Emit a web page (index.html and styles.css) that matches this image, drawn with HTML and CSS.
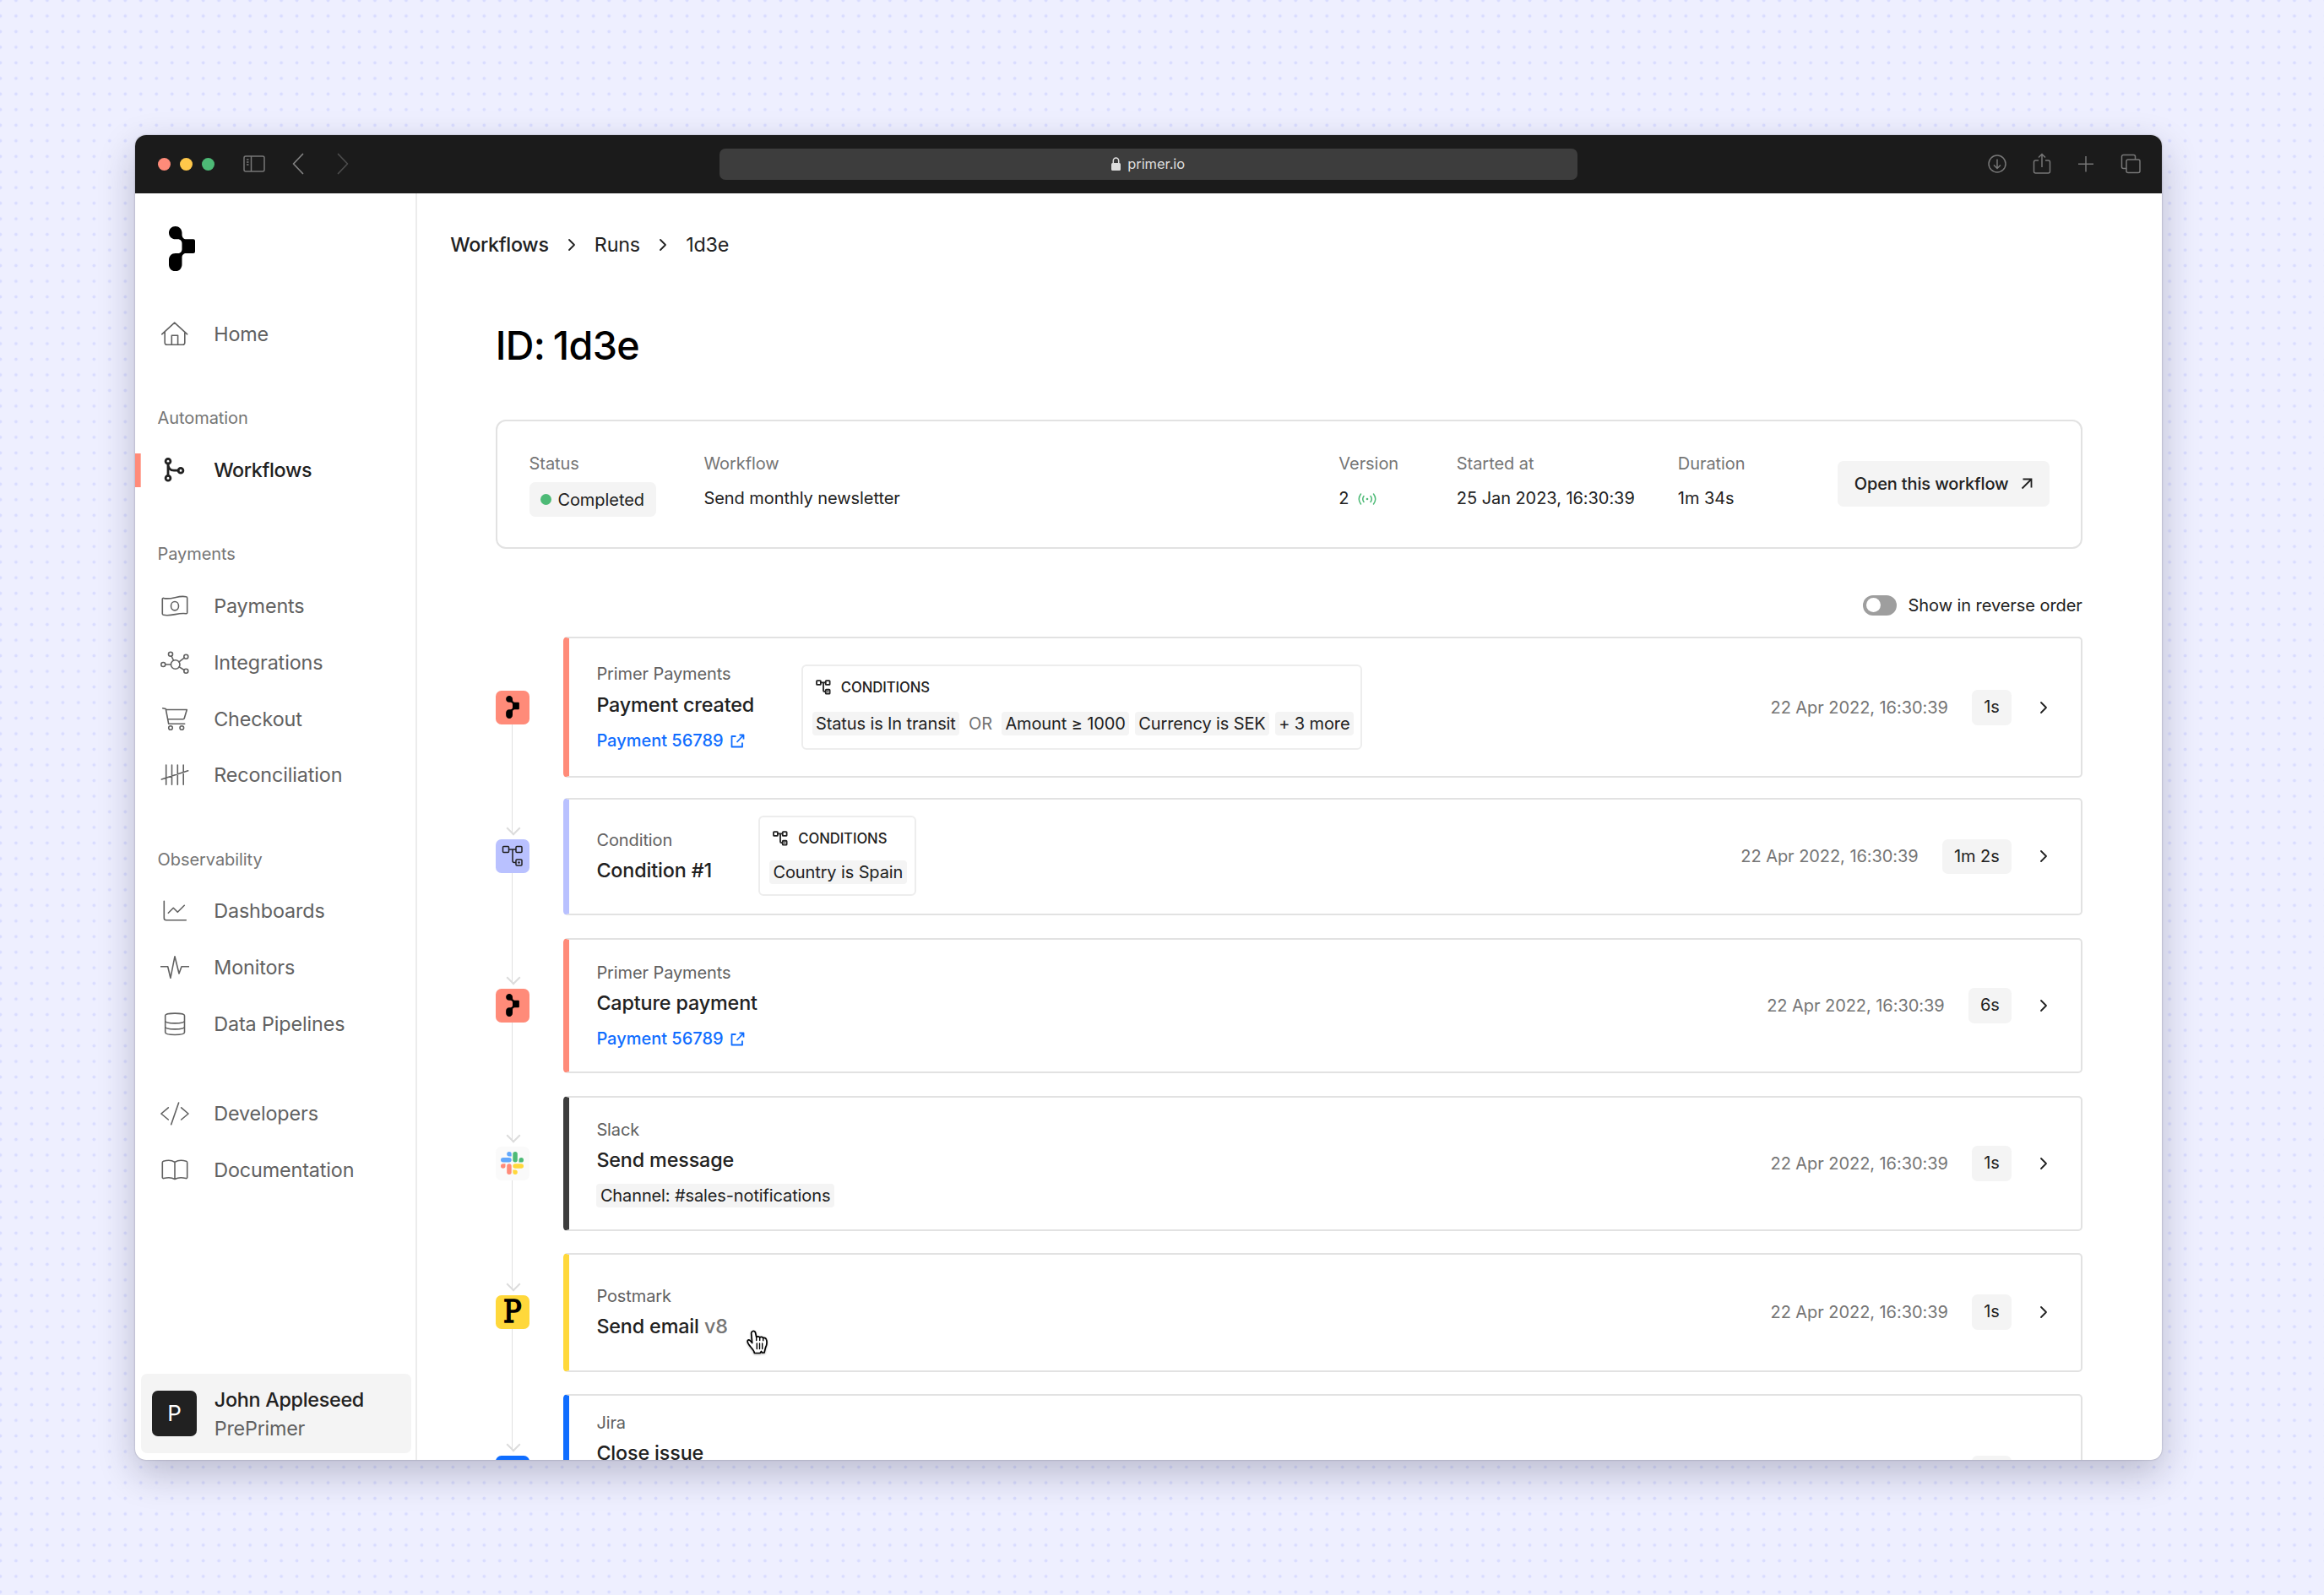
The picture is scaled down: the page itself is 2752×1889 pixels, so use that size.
FILE: index.html
```html
<!DOCTYPE html>
<html lang="en">
<head>
<meta charset="utf-8">
<title>Primer – Workflow run 1d3e</title>
<link rel="stylesheet" href="styles.css">
</head>
<body>
<svg class="defs" width="0" height="0" aria-hidden="true">
  <symbol id="primer" viewBox="0 0 31 53.3"><path d="M7.75 0C12 0 15.5 3.4 15.5 7.7V10C15.5 13 17.500 15.300 20.500 15.300H29Q31 15.300 31 17.300V30Q31 32 29 32H20.500C17.500 32 15.500 34 15.500 37V45C15.500 50 12 53.300 7.750 53.300S0 50 0 45.500V40C0 35.500 3 32 7.750 32H10.500C13.500 32 15.500 30 15.500 27V20.500C15.500 17.500 13.500 15.300 10.500 15.300H7.750C3.400 15.300 0 12 0 7.700S3.400 0 7.750 0Z"/></symbol>
  <symbol id="chev" viewBox="0 0 12 16"><path d="M3 2l6 6-6 6" fill="none" stroke="currentColor" stroke-width="1.8" stroke-linecap="round" stroke-linejoin="round"/></symbol>
  <symbol id="branch" viewBox="0 0 26 26"><g fill="none" stroke="currentColor"><rect x="1.500" y="1.500" width="7" height="7" rx="1"/><rect x="17" y="1.500" width="7" height="7" rx="1"/><rect x="17" y="17" width="7" height="7" rx="1"/><path d="M8.500 5H17M13 5v13.500q0 2 2 2h2"/></g><circle cx="20.500" cy="20.500" r="1.300" fill="currentColor"/></symbol>
  <symbol id="ext" viewBox="0 0 17 17"><path d="M6.500 3H1.500V15.500H14V10.500M10.500 1.500H15.500V6.500M15.500 1.500L7.500 10" fill="none" stroke="currentColor" stroke-width="1.800" stroke-linejoin="round"/></symbol>
</svg>
<svg class="dots" aria-hidden="true"><defs><pattern id="dot" width="18.48" height="18.48" x="-8.8" y="-8.8" patternUnits="userSpaceOnUse"><circle cx="9.240" cy="9.240" r="1.900" fill="#d9dcff"/></pattern></defs><rect width="100%" height="100%" fill="url(#dot)"/></svg>

<div class="window">
  <header class="toolbar">
    <div class="lights"><i class="red"></i><i class="amber"></i><i class="green"></i></div>
    <svg class="panel" width="26" height="20" viewBox="0 0 26 20" fill="none" stroke="#777" stroke-width="1.500"><rect x="1" y="1" width="24" height="18" rx="2"/><path d="M9.500 1v18M4 5h2.500M4 8h2.500M4 11h2.500"/></svg>
    <svg class="back" width="14" height="26" viewBox="0 0 14 26" fill="none" stroke="#828282" stroke-width="1.700" stroke-linecap="round" stroke-linejoin="round"><path d="M12.500 1.500L1.500 13l11 11.500"/></svg>
    <svg class="fwd" width="14" height="26" viewBox="0 0 14 26" fill="none" stroke="#4c4c4c" stroke-width="1.700" stroke-linecap="round" stroke-linejoin="round"><path d="M1.500 1.500L12.500 13l-11 11.500"/></svg>
    <div class="url">
      <svg width="11" height="16" viewBox="0 0 11 16"><rect y="7" width="11" height="9" rx="1.500" fill="#dedede"/><path d="M2.300 8V4.500a3.200 3.500 0 0 1 6.400 0V8" fill="none" stroke="#dedede" stroke-width="1.500"/></svg>
      <span>primer.io</span>
    </div>
    <div class="tools">
      <svg width="24" height="26" viewBox="0 0 24 26"><circle cx="12" cy="13" r="10"/><path d="M12 7.500v10.500M8 14.500l4 4 4-4"/></svg>
      <svg width="24" height="26" viewBox="0 0 24 26"><path d="M8 9H4.500a2 2 0 0 0-2 2v11a2 2 0 0 0 2 2h15a2 2 0 0 0 2-2V11a2 2 0 0 0-2-2H16M12 17V2M8 5.500l4-4 4 4"/></svg>
      <svg width="24" height="26" viewBox="0 0 24 26"><path d="M12 4v18.500M3 13.200h18"/></svg>
      <svg width="24" height="26" viewBox="0 0 24 26"><rect x="7" y="8" width="16" height="15.500" rx="2"/><path d="M7 18.500H3.500a2 2 0 0 1-2-2V4.500a2 2 0 0 1 2-2h12a2 2 0 0 1 2 2V8"/></svg>
    </div>
  </header>

  <div class="body">
    <aside class="sidebar">
      <svg class="logo" width="31" height="53.300"><use href="#primer"/></svg>
      <nav>
        <a class="item"><svg viewBox="0 0 34 34"><path d="M1.700 16.800L16.700 3.200l15 13.600M5.200 14.200V27a2.300 2.300 0 0 0 2.300 2.300h19a2.300 2.300 0 0 0 2.300-2.300V14.200M13.300 29V18.300h7.300V29"/></svg>Home</a>
        <h4>Automation</h4>
        <a class="item active"><svg viewBox="0 0 34 34"><circle cx="9" cy="6.200" r="2.900"/><circle cx="9" cy="26.200" r="2.900"/><circle cx="24" cy="17.200" r="2.900"/><path d="M9 9v14.300M9 9.500c0 4.500 2.500 7.700 7 7.700h5"/></svg>Workflows</a>
        <h4>Payments</h4>
        <a class="item"><svg viewBox="0 0 34 34"><path d="M3.500 7.400C13 10 21 3.500 30.500 5.800a1.500 1.500 0 0 1 1.200 1.500V24.600a1 1 0 0 1-1.200 1.100C21 24 13 29.500 3.500 27.300A1.500 1.500 0 0 1 2.300 26V8.200A1 1 0 0 1 3.500 7.400Z"/><ellipse cx="17" cy="16.700" rx="4.500" ry="5.200"/></svg>Payments</a>
        <a class="item"><svg viewBox="0 0 34 34"><circle cx="17.700" cy="19" r="5.300"/><circle cx="3.300" cy="19" r="2.500"/><circle cx="12" cy="6.700" r="2.500"/><circle cx="30.300" cy="9.700" r="2.500"/><circle cx="30.300" cy="26.700" r="2.500"/><path d="M5.800 19h6.600M13 9l2.500 5.200M28.200 11.200L22 15.800M28 25.500L22.300 21.800"/></svg>Integrations</a>
        <a class="item"><svg viewBox="0 0 34 34"><path d="M2.700 3.700l3.600.8L9.700 22.300H28.700M6.600 5.500H31.300L28.300 15.500a1.500 1.500 0 0 1-1.400 1.200H8.700"/><circle cx="12" cy="27" r="2.300"/><circle cx="25.300" cy="27" r="2.300"/></svg>Checkout</a>
        <a class="item"><svg viewBox="0 0 34 34"><path d="M6.700 5v23.300M13.500 5v23.300M20.300 5v23.300M27.200 5v23.300M1.300 22L32.700 11.700"/></svg>Reconciliation</a>
        <h4>Observability</h4>
        <a class="item"><svg viewBox="0 0 34 34"><path d="M4.300 5.300V25.300a2.400 2.400 0 0 0 2.400 2.400H30.300M9.300 19.300l6-6 5 5 8-8"/></svg>Dashboards</a>
        <a class="item"><svg viewBox="0 0 34 34"><path d="M.3 15.700H8.700l3.200 13.600L17 3.700l5 20.300 3-8.300H33.500"/></svg>Monitors</a>
        <a class="item"><svg viewBox="0 0 34 34"><path d="M5.700 6.700C5.700 3.200 28.500 3.200 28.500 6.700V26.500C28.500 30.500 5.700 30.500 5.700 26.500ZM5.700 13C5.700 16.800 28.500 16.800 28.500 13M5.700 20C5.700 23.800 28.500 23.800 28.500 20"/></svg>Data Pipelines</a>
        <a class="item spaced"><svg viewBox="0 0 34 34"><path d="M9.300 9.800L.9 17l8.400 7M24.700 9.800L33 17l-8.300 7M21.600 4L12.700 29.700"/></svg>Developers</a>
        <a class="item"><svg viewBox="0 0 34 34"><path d="M17 7.300C13 4.700 7.500 5 3.500 6.300A1.700 1.700 0 0 0 2.300 8V25.500a1.200 1.200 0 0 0 1.500 1.100C8 25.500 13 25.200 17 27.500C21 25.200 26 25.500 30.200 26.600A1.200 1.200 0 0 0 31.700 25.500V8A1.700 1.700 0 0 0 30.500 6.300C26.500 5 21 4.700 17 7.300ZM17 7.300V27.500"/></svg>Documentation</a>
      </nav>
      <div class="account">
        <div class="avatar">P</div>
        <div class="names"><div class="who">John Appleseed</div><div class="org">PrePrimer</div></div>
      </div>
    </aside>

    <main>
      <div class="crumbs"><b>Workflows</b><svg class="chev"><use href="#chev"/></svg><span>Runs</span><svg class="chev"><use href="#chev"/></svg><span>1d3e</span></div>
      <div class="content">
        <h1>ID: 1d3e</h1>
        <section class="info">
          <div class="col status"><label>Status</label><div class="badge"><i></i>Completed</div></div>
          <div class="col workflow"><label>Workflow</label><p>Send monthly newsletter</p></div>
          <div class="col version"><label>Version</label><p>2<svg width="22" height="14" viewBox="0 0 22 14" fill="none" stroke="#4dba76" stroke-width="1.500" stroke-linecap="round"><path d="M3.500 1Q-1 7 3.500 13M7 3.500Q4.500 7 7 10.500M15 3.500Q17.500 7 15 10.500M18.500 1Q23 7 18.500 13"/><circle cx="11" cy="7" r="1.300" fill="#4dba76" stroke="none"/></svg></p></div>
          <div class="col started"><label>Started at</label><p>25 Jan 2023, 16:30:39</p></div>
          <div class="col duration"><label>Duration</label><p>1m 34s</p></div>
          <button class="open">Open this workflow<svg width="14" height="14" viewBox="0 0 14 14" fill="none" stroke="currentColor" stroke-width="1.800"><path d="M2.500 1.500H12.500V11.500M12.500 1.500L1.500 12.500"/></svg></button>
        </section>
        <div class="order"><i class="switch"></i>Show in reverse order</div>

        <div class="timeline">
          <div class="rail">
            <div class="node coral"><svg width="16" height="27"><use href="#primer"/></svg></div>
            <div class="link l1"></div>
            <div class="node lilac"><svg width="26" height="26" stroke-width="1.500"><use href="#branch"/></svg></div>
            <div class="link l2"></div>
            <div class="node coral"><svg width="16" height="27"><use href="#primer"/></svg></div>
            <div class="link l3"></div>
            <div class="node pale"><svg width="27" height="27" viewBox="0 0 27 27"><g fill="#62a8fc"><rect y="7.100" width="12.700" height="5.500" rx="2.750"/><path d="M12.700 5.500V2.750a2.750 2.750 0 1 0-2.750 2.750Z"/></g><g fill="#4dba76"><rect x="14.300" width="5.500" height="12.600" rx="2.750"/><path d="M21.500 12.600h2.700a2.750 2.750 0 1 0-2.700-2.750Z"/></g><g fill="#ff8b79"><rect x="7.200" y="14.300" width="5.500" height="12.600" rx="2.750"/><path d="M5.500 14.300H2.750a2.750 2.750 0 1 0 2.750 2.750Z"/></g><g fill="#ffd83b"><rect x="14.300" y="14.300" width="12.700" height="5.500" rx="2.750"/><path d="M14.300 21.400v2.800a2.750 2.750 0 1 0 2.750-2.800Z"/></g></svg></div>
            <div class="link l4"></div>
            <div class="node yellow"><span>P</span></div>
            <div class="link l5"></div>
            <div class="node blue"></div>
          </div>
          <div class="steps">
            <article class="step s1 coral">
              <div class="text"><small>Primer Payments</small><h3>Payment created</h3><a class="ref">Payment 56789<svg width="17" height="17"><use href="#ext"/></svg></a></div>
              <div class="conds c1"><h5><svg width="18" height="18" stroke-width="2.600"><use href="#branch"/></svg>CONDITIONS</h5>
                <div class="chips"><span class="chip">Status is In transit</span><span class="or">OR</span><span class="chip">Amount ≥ 1000</span><span class="chip">Currency is SEK</span><span class="chip">+ 3 more</span></div></div>
              <time>22 Apr 2022, 16:30:39</time><span class="took">1s</span><svg class="chev"><use href="#chev"/></svg>
            </article>
            <article class="step s2 lilac">
              <div class="text"><small>Condition</small><h3>Condition #1</h3></div>
              <div class="conds c2"><h5><svg width="18" height="18" stroke-width="2.600"><use href="#branch"/></svg>CONDITIONS</h5>
                <div class="chips"><span class="chip">Country is Spain</span></div></div>
              <time>22 Apr 2022, 16:30:39</time><span class="took">1m 2s</span><svg class="chev"><use href="#chev"/></svg>
            </article>
            <article class="step s3 coral">
              <div class="text"><small>Primer Payments</small><h3>Capture payment</h3><a class="ref">Payment 56789<svg width="17" height="17"><use href="#ext"/></svg></a></div>
              <time>22 Apr 2022, 16:30:39</time><span class="took">6s</span><svg class="chev"><use href="#chev"/></svg>
            </article>
            <article class="step s4 dark">
              <div class="text"><small>Slack</small><h3>Send message</h3><span class="chip channel">Channel: #sales-notifications</span></div>
              <time>22 Apr 2022, 16:30:39</time><span class="took">1s</span><svg class="chev"><use href="#chev"/></svg>
            </article>
            <article class="step s5 yellow">
              <div class="text"><small>Postmark</small><h3>Send email <em>v8</em></h3></div>
              <time>22 Apr 2022, 16:30:39</time><span class="took">1s</span><svg class="chev"><use href="#chev"/></svg>
              <svg class="cursor" width="28" height="30" viewBox="0 0 28 30"><path d="M7.500 1.500C9 1 10.300 2 10.600 3.500L11.700 8.500C12.500 7.500 15 7.500 15.700 9C16.700 8 19 8.200 19.700 9.700C21 9 23 9.500 23.500 11.500C24.500 14.500 24 18 22.500 21L21 27H18.500L17.500 25.500L16 27.500H9.500C9 25 7 22.500 5.200 20.500C3.500 18.500 1.500 16 1.200 13.800C1 12 2.700 11.500 4 12.500L6.700 15.500L5.700 4.500C5.500 3 6 2 7.500 1.500Z" fill="#fff" stroke="#000" stroke-width="1.700" stroke-linejoin="round"/><path d="M12.300 16v6.500M15.500 16v6.500M18.700 16v6.500M11.700 8.500v4M15.700 9v3.500M19.700 9.700v3" stroke="#000" stroke-width="1.400" stroke-linecap="round"/></svg>
            </article>
            <article class="step s6 blue">
              <div class="text"><small>Jira</small><h3>Close issue</h3></div>
              <span class="took"></span><svg class="chev"><use href="#chev"/></svg>
            </article>
          </div>
        </div>
      </div>
    </main>
  </div>
</div>
</body>
</html>
```
FILE: styles.css
```css
* { box-sizing: border-box; }
html, body { margin: 0; height: 100%; overflow: hidden; }
body {
  position: relative;
  padding: 160px 192px 0 160px;
  background: #eeefff;
  color: #212121;
  font: 400 20px/28px Inter, "Liberation Sans", sans-serif;
  letter-spacing: -.003em;
}
h1, h3, h4, h5, p { margin: 0; font-weight: 400; }
svg { display: block; flex: none; }
i, em { font-style: normal; }
.defs { position: absolute; }
.dots { position: absolute; inset: 0; width: 100%; height: 100%; }

.window {
  position: relative;
  width: 2400px;
  height: 1568.500px;
  border-radius: 13px;
  overflow: hidden;
  background: #fff;
  box-shadow: 0 0 2px rgba(20, 20, 40, .35), 0 16px 44px rgba(20, 20, 50, .24);
}

/* Browser toolbar */
.toolbar {
  display: flex;
  align-items: center;
  height: 68.700px;
  padding: 0 25.500px 0 27.300px;
  background: #1b1b1b;
}
.lights { display: flex; gap: 10.700px; }
.lights i { width: 15px; height: 15px; border-radius: 50%; }
.lights .red { background: #ff8b79; }
.lights .amber { background: #ffc84a; }
.lights .green { background: #4dba76; }
.panel { margin-left: 34.500px; }
.back { margin-left: 32px; }
.fwd { margin-left: 38.500px; }
.url {
  display: flex;
  align-items: center;
  justify-content: center;
  gap: 8px;
  width: 1016px;
  height: 36.500px;
  margin-left: 439.500px;
  padding-right: 1px;
  border-radius: 7px;
  background: #3d3d3d;
  color: #dedede;
  font-size: 16.500px;
}
.tools { display: flex; gap: 28.500px; margin-left: auto; fill: none; stroke: #777; stroke-width: 1.500; }

.body { display: flex; height: 1500px; }

/* Sidebar */
.sidebar {
  display: flex;
  flex-direction: column;
  width: 334px;
  border-right: 2px solid #ececec;
}
.logo { margin: 39.500px 0 0 40px; }
nav { margin-top: 41.200px; }
nav h4 {
  height: 54.500px;
  margin-top: 40px;
  padding-left: 26.500px;
  color: #757575;
  line-height: 52px;
}
.item {
  display: flex;
  align-items: center;
  height: 66.670px;
  padding-left: 29.700px;
  color: #616161;
  font-size: 23.330px;
  letter-spacing: -.005em;
}
.item svg {
  width: 34px;
  height: 34px;
  margin-right: 29.500px;
  fill: none;
  stroke: currentColor;
  stroke-width: 1.600;
  stroke-linejoin: round;
  stroke-linecap: round;
}
.item.active {
  color: #212121;
  font-weight: 500;
  letter-spacing: -.015em;
  background: linear-gradient(#ff8b79, #ff8b79) 0 50% / 6.700px 40px no-repeat;
}
.item.active svg { stroke-width: 2.800; }
.item.spaced { margin-top: 40px; }
.account {
  display: flex;
  align-items: center;
  gap: 20.500px;
  height: 94.700px;
  margin: auto 5.300px 7.300px 6.700px;
  padding-left: 13.300px;
  border-radius: 7px;
  background: #f4f4f4;
  font-size: 23.330px;
  line-height: 34px;
}
.avatar {
  width: 53.300px;
  height: 53.300px;
  border-radius: 7px;
  background: #212121;
  color: #fff;
  font-size: 26px;
  line-height: 54px;
  text-align: center;
}
.names { padding-top: 2px; }
.who { font-weight: 500; letter-spacing: -.012em; }
.org { color: #616161; letter-spacing: -.01em; }

/* Main column */
main { flex: 1; padding-top: 44.500px; }
.crumbs {
  display: flex;
  align-items: center;
  height: 33.300px;
  padding-left: 39.300px;
  font-size: 23.330px;
}
.crumbs b { font-weight: 500; letter-spacing: -.013em; }
.crumbs .chev { margin: 0 21px 0 21.200px; }
.crumbs span { letter-spacing: -.008em; }
.chev { width: 12px; height: 16px; }
.content { margin: 0 93.700px 0 92.700px; }
h1 {
  margin-top: 74.200px;
  color: #000;
  font-size: 46.670px;
  font-weight: 500;
  line-height: 56px;
  letter-spacing: -.015em;
  word-spacing: -2px;
}

.info {
  display: flex;
  height: 153px;
  margin-top: 60px;
  padding: 36.500px 37.700px 0 37.900px;
  border: 2px solid #e2e2e2;
  border-radius: 12px;
}
.info label { display: block; color: #757575; }
.info p { display: flex; align-items: center; margin-top: 13px; }
.info p svg { margin: 2px 0 0 10.500px; }
.status { width: 206.800px; }
.workflow { flex: 1; }
.version { width: 139.500px; }
.started { width: 262px; }
.duration { width: 188.800px; }
.badge {
  display: flex;
  align-items: center;
  gap: 7px;
  width: 150.300px;
  height: 41.700px;
  margin-top: 7.500px;
  padding-left: 13.300px;
  border-radius: 6.700px;
  background: #f4f4f4;
}
.badge i { width: 13.500px; height: 13.500px; border-radius: 50%; background: #4dba76; }
.open {
  display: flex;
  align-items: center;
  justify-content: center;
  gap: 14px;
  width: 251px;
  height: 54.300px;
  margin-top: 11px;
  padding: 0;
  border: 0;
  border-radius: 6.700px;
  background: #f4f4f4;
  color: #212121;
  font: 500 20px/28px Inter, sans-serif;
  letter-spacing: -.007em;
}

.order {
  display: flex;
  align-items: center;
  justify-content: flex-end;
  gap: 13.300px;
  height: 24px;
  margin-top: 55.300px;
  padding-right: .5px;
}
.switch {
  width: 40px;
  height: 24px;
  padding: 3.500px;
  border-radius: 12px;
  background: #9e9e9e;
}
.switch::before { content: ""; display: block; width: 17px; height: 17px; border-radius: 50%; background: #fff; }

/* Run timeline */
.timeline { display: flex; margin-top: 25.300px; }
.rail { width: 80px; padding-top: 63.700px; }
.node {
  display: flex;
  align-items: center;
  justify-content: center;
  width: 40px;
  height: 40px;
  border-radius: 6.700px;
}
.node.coral { background: #ff8b79; }
.node.lilac { background: #b9c1ff; }
.node.pale { background: #fafafa; }
.node.yellow { background: #ffd83b; }
.node.blue { background: #0f6dff; }
.node span {
  color: #000;
  font: 400 36.500px/42px "DejaVu Serif", serif;
  -webkit-text-stroke: 1.600px #000;
  transform: translateX(.5px) scaleX(.88);
}
.link {
  position: relative;
  width: 1.700px;
  margin: 0 0 6px 19px;
  background: #e0e0e0;
}
.link::after {
  content: "";
  position: absolute;
  left: -4px;
  bottom: 1px;
  width: 10px;
  height: 10px;
  border: solid #dcdcdc;
  border-width: 0 2px 2px 0;
  transform: rotate(45deg);
}
.l1, .l2 { height: 130.500px; }
.l3 { height: 141px; }
.l4 { height: 130.300px; }
.l5 { height: 143.500px; }

.steps { flex: 1; }
.step {
  position: relative;
  display: flex;
  align-items: center;
  padding: 0 38.800px 0 32.700px;
  border: 2px solid #e2e2e2;
  border-left: 7px solid;
  border-radius: 5px;
}
.step.coral { border-left-color: #ff8b79; }
.step.lilac { border-left-color: #b9c1ff; }
.step.dark { border-left-color: #3d3d3d; }
.step.yellow { border-left-color: #ffd83b; }
.step.blue { border-left-color: #0f6dff; }
.s1 { height: 167px; }
.s2 { height: 139.500px; margin-top: 23.400px; }
.s3 { height: 159.700px; margin-top: 27px; }
.s4 { height: 159.700px; margin-top: 27px; }
.s5 { height: 140.500px; margin-top: 26.500px; }
.s6 { height: 187px; margin-top: 26.500px; }
.text { padding-top: 1.200px; }
.text small { display: block; color: #616161; font-size: 20px; line-height: 33.300px; letter-spacing: -.005em; }
.text h3 { font-size: 23.330px; font-weight: 500; line-height: 38.800px; letter-spacing: -.006em; }
.text em { color: #757575; }
.ref {
  display: flex;
  align-items: center;
  gap: 8.500px;
  height: 28px;
  margin: 8.700px 0 3px;
  color: #0f6dff;
  font-weight: 500;
  letter-spacing: 0;
}
.s4 .text { padding-top: 0; }
.s6 .text { align-self: flex-start; padding-top: 15.700px; }
.chip {
  display: block;
  height: 28px;
  padding: 0 4.500px;
  border-radius: 4px;
  background: #f4f4f4;
  letter-spacing: -.006em;
  white-space: nowrap;
}
.channel { margin: 8px 0 3px; }
.conds {
  align-self: flex-start;
  border: 2px solid #ededed;
  border-radius: 6px;
}
.c1 { width: 664px; height: 101px; margin: 31px 0 0 55.700px; }
.c2 { width: 187px; height: 95px; margin: 19.700px 0 0 55.300px; }
.conds h5 {
  display: flex;
  align-items: center;
  gap: 12px;
  height: 28px;
  margin-top: 11px;
  padding-left: 15px;
  font-size: 16.670px;
  font-weight: 500;
  line-height: 28px;
}
.chips { display: flex; gap: 6.500px; padding-left: 10.700px; }
.c1 .chips { margin-top: 15px; }
.c2 .chips { margin-top: 11.700px; }
.or { margin: 0 4.300px; color: #757575; }
time { margin-left: auto; color: #757575; }
.took {
  min-width: 47px;
  height: 41.700px;
  margin-left: 28px;
  padding: 0 14.300px;
  border-radius: 6.700px;
  background: #f4f4f4;
  line-height: 41.700px;
}
.step .chev { margin-left: 31.500px; }
.s6 .took { margin-left: auto; }
.cursor { position: absolute; left: 210px; top: 88.500px; filter: drop-shadow(0 1px 1px rgba(0, 0, 0, .3)); }
```
